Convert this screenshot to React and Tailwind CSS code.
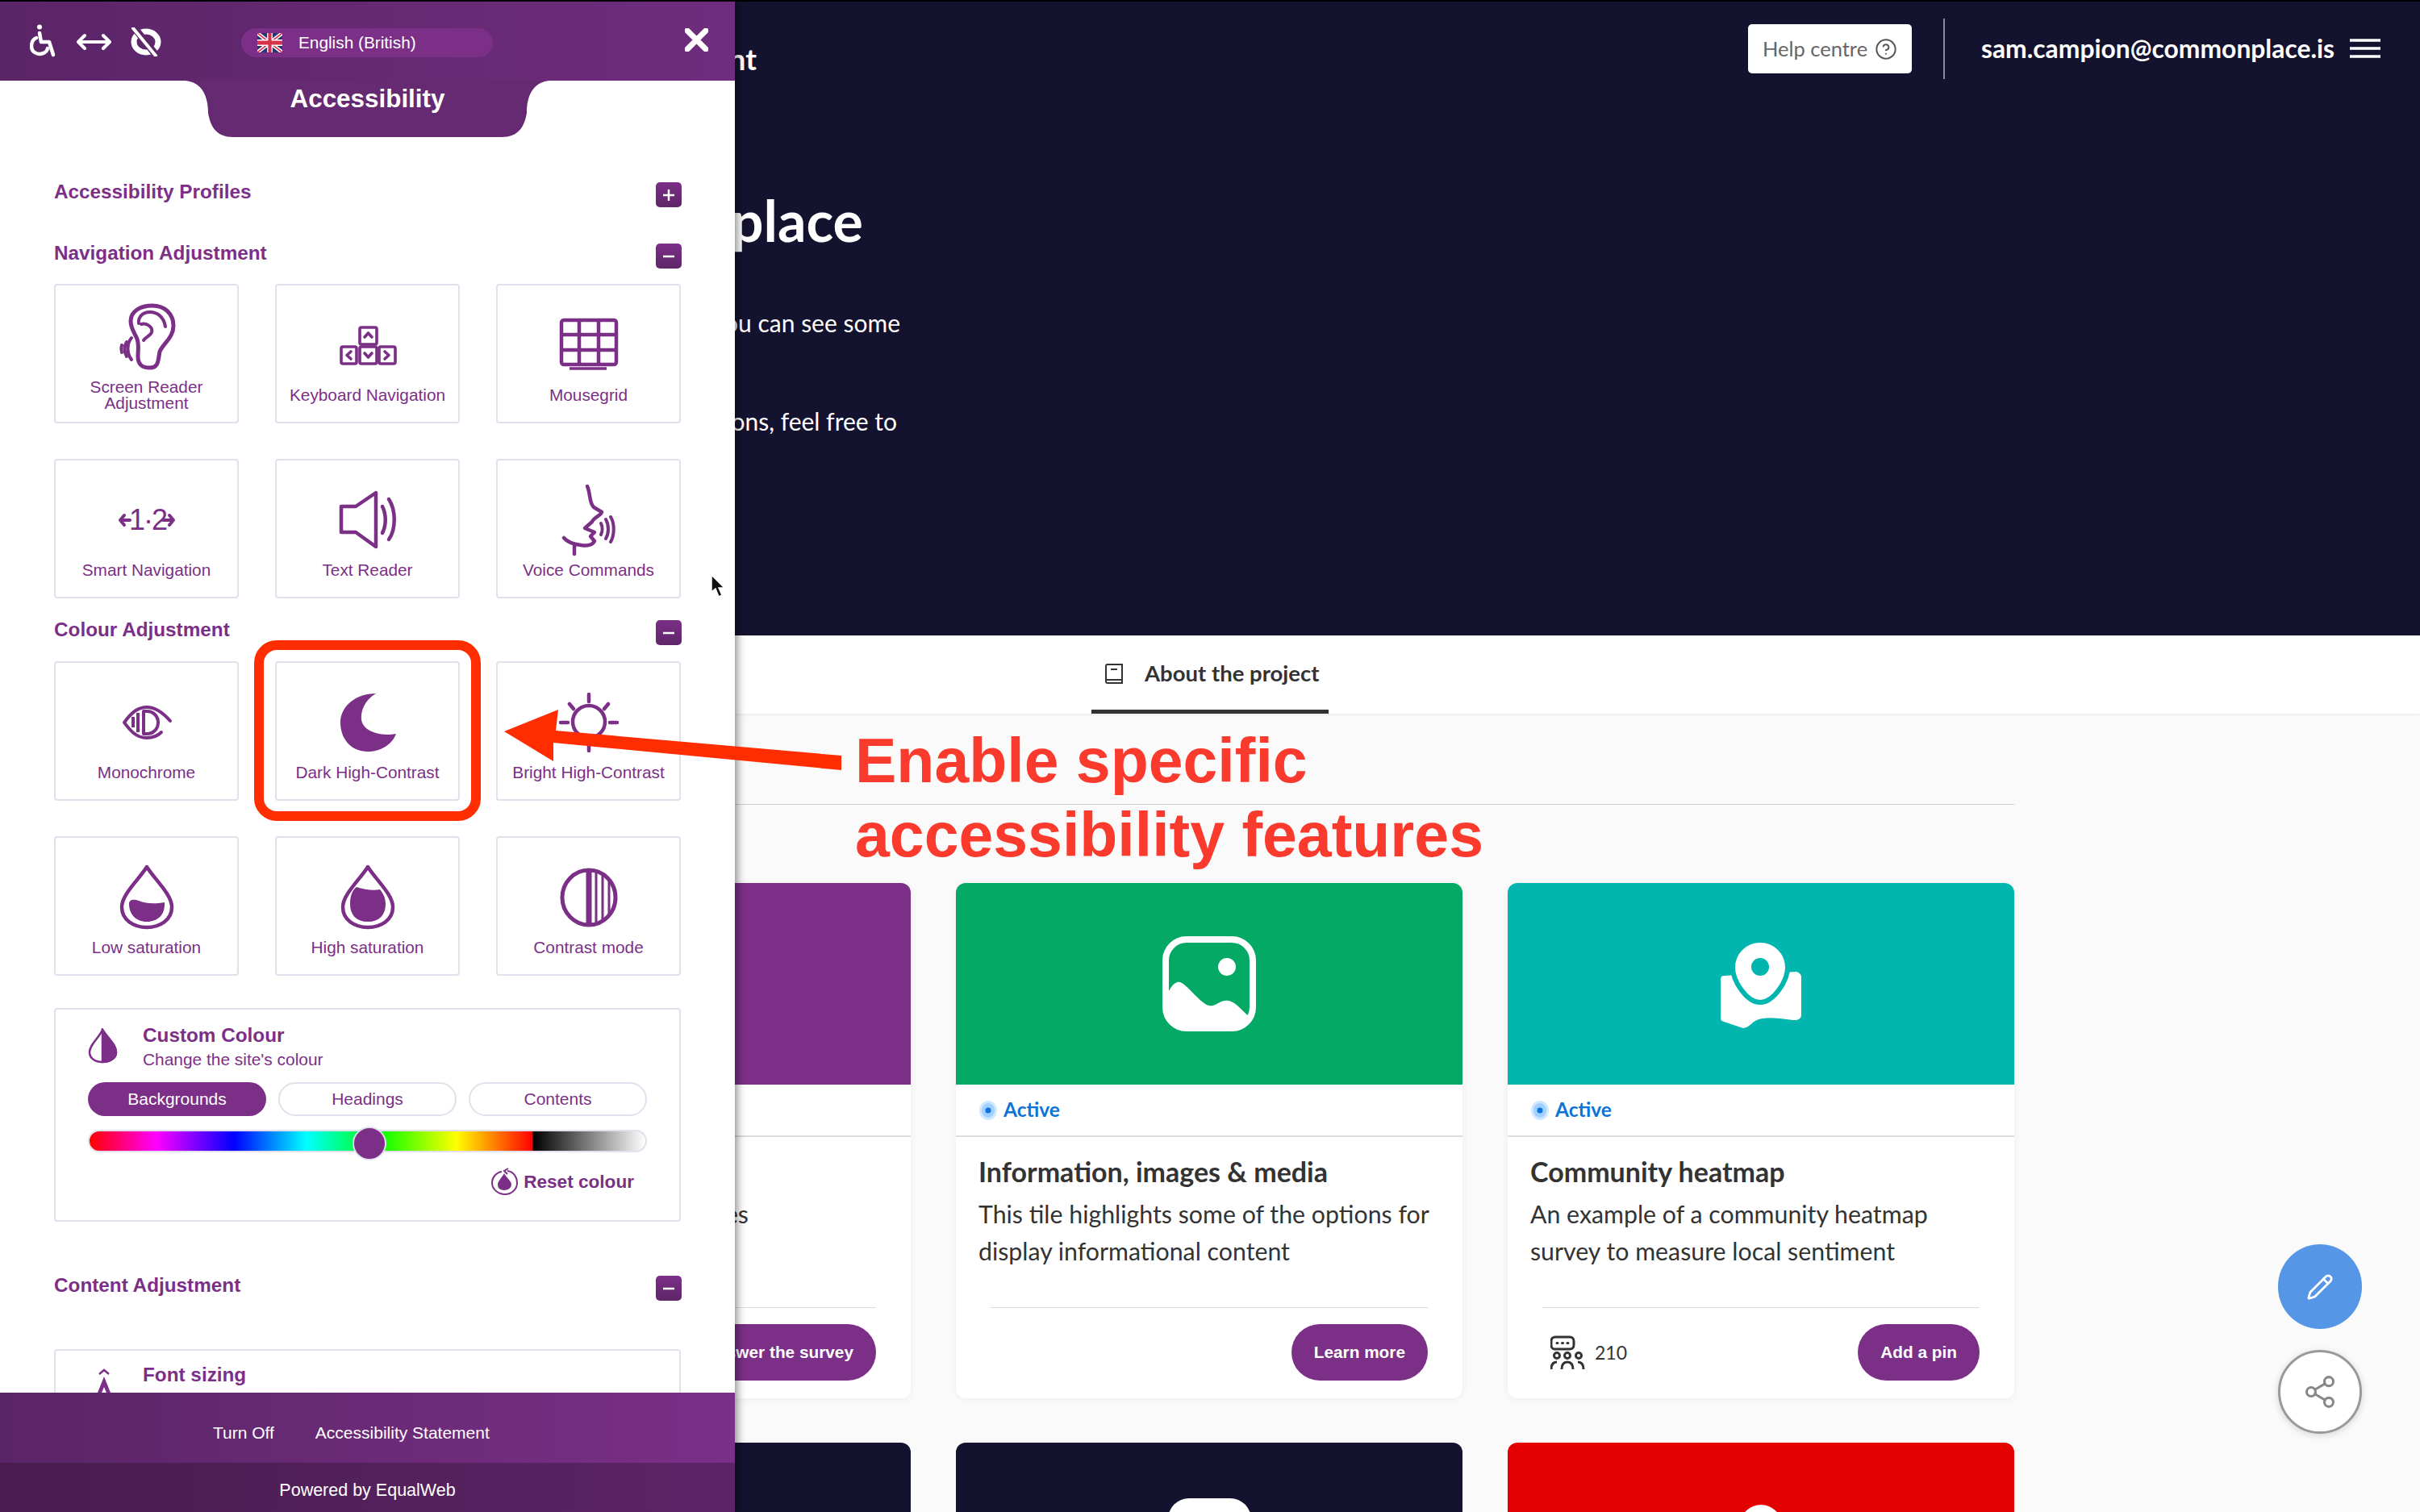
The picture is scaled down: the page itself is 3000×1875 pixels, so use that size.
import React from "react";
import { CircleHelp, Pencil, Share2 } from "lucide-react";

const P = "#7b2f87";
const purple = "text-[#7b2f87]";

function Svg({ children }) {
  return (
    <svg viewBox="0 0 80 90" width="80" height="90" fill="none" stroke={P} strokeLinecap="round" strokeLinejoin="round" style={{ overflow: "visible" }}>
      {children}
    </svg>
  );
}

const icons = {
  ear: (
    <Svg>
      <g strokeWidth="5">
        <path d="M47 5C62 5 73 15 73 30C73 45 60 52 56 62C54 72 55 82 44 82C34 82 29 78 29 68C29 58 31 52 27 44C23 36 20 32 20 24C20 12 32 5 47 5Z" />
      </g>
      <g strokeWidth="4">
        <path d="M63 31C61 18 52 13 44 13C34 13 29 20 30 27" />
        <path d="M33 28C40 26 48 32 46 38C45 42 38 44 36 48" />
        <path d="M21 45C15 52 15 64 21 72" />
        <path d="M15 50C12 55 12 62 15 68" />
        <path d="M9 54C8 57 8 60 9 63" />
      </g>
    </Svg>
  ),
  keys: (
    <Svg>
      <g strokeWidth="3.600">
        <rect x="30" y="32" width="21" height="21" rx="2" />
        <rect x="7" y="56" width="19" height="21" rx="2" />
        <rect x="30" y="56" width="21" height="21" rx="2" />
        <rect x="54" y="56" width="20" height="21" rx="2" />
        <path d="M36 44l4.500-5 4.500 5M19 62l-5 4.500 5 4.500M36 64l4.500 5 4.500-5M61 62l5 4.500-5 4.500" />
      </g>
    </Svg>
  ),
  grid: (
    <Svg>
      <g strokeWidth="4.500">
        <rect x="6" y="23" width="68" height="55" rx="3" />
        <path d="M28 23V78M52 23V78M6 41H74M6 60H74" strokeLinecap="butt" />
      </g>
      <path d="M16 83H62" strokeWidth="3.500" strokeLinecap="butt" />
    </Svg>
  ),
  smart: (
    <Svg>
      <text x="41" y="66" textAnchor="middle" fontSize="36" letterSpacing="-2" fill={P} stroke="none" fontFamily="Liberation Sans, sans-serif">1·2</text>
      <path d="M19 54H7M12 48l-5 6 5 6M60 54H73M68 48l5 6-5 6" strokeWidth="4" />
    </Svg>
  ),
  speaker: (
    <Svg>
      <path d="M7 37H25L50 20V87L25 69H7Z" strokeWidth="4.500" />
      <path d="M58 37C63 47 63 60 58 70M66 28C75 42 75 65 66 78" strokeWidth="4.500" />
    </Svg>
  ),
  face: (
    <Svg>
      <path d="M38 12C42 20 40 32 46 38L56 44C56 48 46 50 44 56L35 64L47 69L42 74L47 80C44 86 36 86 30 85C22 84 14 82 9 76M22 84V96" strokeWidth="4.500" />
      <path d="M55 58C57 62 57 68 55 72M61 53C65 60 65 70 61 77M67 50C72 58 72 72 67 81" strokeWidth="4" />
    </Svg>
  ),
  eye: (
    <Svg>
      <g strokeWidth="4">
        <path d="M12 54C22 40 30 35 40 35C52 35 62 44 69 52M12 54C18 62 26 73 40 73C48 73 54 70 58 66" />
        <path d="M36 40H40C48 40 54 46 54 54C54 62 48 68 40 68H36Z" />
        <path d="M29 42V66M23 47V60" strokeLinecap="butt" />
      </g>
    </Svg>
  ),
  moon: (
    <Svg>
      <path d="M50 18C36 26 31 40 32 50C33 62 50 72 75 68C70 82 55 90 40 90C20 90 6 75 6 54C6 34 25 18 50 18Z" fill={P} stroke="none" />
    </Svg>
  ),
  sun: (
    <Svg>
      <g strokeWidth="4.500">
        <circle cx="40" cy="53" r="20" />
        <path d="M40 19V28M16 31L21 37M64 31L59 37M5 54H14M66 54H75M40 83V89" />
      </g>
    </Svg>
  ),
  low: (
    <Svg>
      <path d="M40 16C30 32 9 50 9 66C9 82 24 91 40 91C56 91 71 82 71 66C71 50 50 32 40 16Z" strokeWidth="4.500" />
      <path d="M18 62C18 56 24 56 30 58C40 62 50 62 62 60C63 75 54 84 40 84C26 84 18 74 18 62Z" fill={P} stroke="none" />
    </Svg>
  ),
  high: (
    <Svg>
      <path d="M40 16C30 32 9 50 9 66C9 82 24 91 40 91C56 91 71 82 71 66C71 50 50 32 40 16Z" strokeWidth="4.500" />
      <path d="M18 62C18 50 22 44 26 41C36 44 46 46 55 44C60 50 62 56 62 62C62 76 54 84 40 84C26 84 18 76 18 62Z" fill={P} stroke="none" />
    </Svg>
  ),
  contrast: (
    <Svg>
      <ellipse cx="40" cy="54" rx="33" ry="34" strokeWidth="5" />
      <path d="M40 20V88" strokeWidth="7" strokeLinecap="butt" />
      <path d="M49 22V86M57 25V83M65 33V75" strokeWidth="3" strokeLinecap="butt" />
    </Svg>
  ),
};

function Tile({ icon, children }) {
  return (
    <div className="flex h-[173px] flex-col items-center rounded-[4px] border-2 border-[#e2e0ec] bg-white pt-[20px]">
      <div className="h-[90px] w-[80px]">{icons[icon]}</div>
      <div className={`mt-[5px] flex h-[42px] items-center whitespace-nowrap text-center text-[20.800px] leading-[20.500px] ${purple}`}>{children}</div>
    </div>
  );
}

function Toggle({ plus }) {
  return (
    <span className="-mr-[1px] flex h-[31px] w-[32px] items-center justify-center rounded-[5px] bg-gradient-to-b from-[#7b2f87] to-[#5f2669]">
      <svg width="16" height="16" viewBox="0 0 16 16" stroke="white" strokeWidth="2.500">
        <path d="M1 8H15" />
        {plus && <path d="M8 1V15" />}
      </svg>
    </span>
  );
}

function SectionRow({ title, plus, className }) {
  return (
    <div className={`flex items-center justify-between ${className}`}>
      <h3 className={`-mt-[8px] text-[24.300px] font-bold leading-[24px] ${purple}`}>{title}</h3>
      <Toggle plus={plus} />
    </div>
  );
}

function Flag() {
  return (
    <svg width="31" height="24" viewBox="0 0 60 40" preserveAspectRatio="none">
      <rect width="60" height="40" fill="#27346f" />
      <path d="M0 0L60 40M60 0L0 40" stroke="#fff" strokeWidth="8" />
      <path d="M0 0L60 40M60 0L0 40" stroke="#d8324a" strokeWidth="3" />
      <path d="M30 0V40M0 20H60" stroke="#fff" strokeWidth="13" />
      <path d="M30 0V40M0 20H60" stroke="#d8324a" strokeWidth="8" />
    </svg>
  );
}

function PanelHeader() {
  return (
    <div className="flex h-[98px] items-start bg-gradient-to-r from-[#5a2567] to-[#702c7e] pl-[37px] pr-[33px]">
      <div className="mt-[28px] flex items-start">
        <svg width="32" height="41" viewBox="0 0 32 41" fill="none" stroke="#fff" strokeWidth="4.500" strokeLinecap="round" strokeLinejoin="round">
          <circle cx="12" cy="3.500" r="3" fill="#fff" stroke="none" />
          <path d="M12 11L14 22L24 22L29 38" />
          <path d="M8 17C1 20 0 31 6 35C12 39 21 36 22 30" />
        </svg>
        <svg className="ml-[26px] mt-[11px]" width="43" height="22" viewBox="0 0 43 22" fill="none" stroke="#fff" strokeWidth="4" strokeLinecap="round" strokeLinejoin="round">
          <path d="M3 11H40M10 3L2 11L10 19M33 3L41 11L33 19" />
        </svg>
        <svg className="ml-[23px] mt-[4px]" width="39" height="36" viewBox="0 0 39 36" fill="none" strokeLinecap="round">
          <ellipse cx="20" cy="18" rx="15" ry="13" stroke="#fff" strokeWidth="7" />
          <path d="M6 1L33 35" stroke="#5f2669" strokeWidth="9" />
          <path d="M4 1L32 35" stroke="#fff" strokeWidth="4" />
        </svg>
      </div>
      <div className="ml-[99px] mt-[33px] flex h-[36px] w-[312px] items-center rounded-full bg-[#7b2f87] pl-[20px] text-[20.800px] text-white">
        <Flag />
        <span className="ml-[20px]">English (British)</span>
      </div>
      <svg className="ml-auto mt-[33px]" width="29" height="29" viewBox="0 0 29 29" stroke="#fff" strokeWidth="7" strokeLinecap="round">
        <path d="M3 3L26 26M26 3L3 26" />
      </svg>
    </div>
  );
}

function TitleTab() {
  return (
    <div className="relative mx-auto flex h-[70px] w-[451px] items-start justify-center pt-[4px]">
      <svg className="absolute inset-0" width="451" height="70" viewBox="0 0 451 70">
        <path d="M0 0H451C430 2 423 20 423 40C420 58 412 70 392 70H59C39 70 31 58 28 40C28 20 21 2 0 0Z" fill="#652a72" />
      </svg>
      <h2 className="relative text-[31.400px] font-bold leading-[38px] text-white">Accessibility</h2>
    </div>
  );
}

function CustomColour() {
  return (
    <div className="mt-[40px] h-[265px] rounded-[4px] border-2 border-[#e2e0ec] px-[40px] pt-[18px]">
      <div className="flex h-[71px]">
        <svg className="mt-[5px]" width="37" height="44" viewBox="0 0 37 44" fill="none" stroke={P} strokeWidth="2.500">
          <path d="M18 2C14 12 2 20 2 30C2 38 10 42 18 42C26 42 35 38 35 30C35 20 24 12 18 2Z" />
          <path d="M18 2C24 12 35 20 35 30C35 38 26 42 18 42Z" fill={P} />
        </svg>
        <div className="ml-[31px]">
          <div className={`text-[24.300px] font-bold leading-[28px] ${purple}`}>Custom Colour</div>
          <div className={`text-[20.900px] leading-[31px] ${purple}`}>Change the site's colour</div>
        </div>
      </div>
      <div className="grid grid-cols-3 gap-x-[15px] pt-[1px] text-center text-[21px]">
        <div className="flex h-[42px] items-center justify-center rounded-full bg-[#7b2f87] text-white">Backgrounds</div>
        <div className={`flex h-[42px] items-center justify-center rounded-full border-2 border-[#e2e0ec] ${purple}`}>Headings</div>
        <div className={`flex h-[42px] items-center justify-center rounded-full border-2 border-[#e2e0ec] ${purple}`}>Contents</div>
      </div>
      <div className="relative mt-[17px] h-[28px] rounded-full border-2 border-[#e2e0ec] bg-[linear-gradient(90deg,#f00_0%,#f0f_12%,#00f_26%,#0ff_39%,#0f0_52%,#ff0_66%,#f00_79.700%,#000_79.800%,#fff_100%)]">
        <div className="absolute left-[326px] top-[-6px] h-[42px] w-[42px] rounded-full border-2 border-[#e2e0ec] bg-[#7b2f87]" />
      </div>
      <div className={`mt-[19px] flex items-center justify-end pr-[16px] text-[22.600px] font-bold ${purple}`}>
        <svg width="33" height="35" viewBox="0 0 33 35" fill="none" stroke={P} strokeWidth="2">
          <path d="M20 4C28 5 32 12 32 19C32 27 25 33 17 33C9 33 1 27 1 19C1 12 6 6 13 5" />
          <path d="M21 1L16 4L20 8" />
          <path d="M16 9C13 14 9 17 9 21C9 25 12 27 16 27C20 27 24 25 24 21C24 17 19 14 16 9Z" fill={P} />
        </svg>
        <span className="ml-[7px]">Reset colour</span>
      </div>
    </div>
  );
}

function Panel() {
  return (
    <aside className="absolute left-0 top-0 bottom-0 flex w-[911px] flex-col bg-white font-['Liberation_Sans',Arial,sans-serif] shadow-[3px_0_10px_rgba(0,0,0,0.45)]">
      <PanelHeader />
      <div className="min-h-0 flex-1 overflow-hidden">
        <TitleTab />
        <div className="px-[67px] pt-[56px]">
          <SectionRow title="Accessibility Profiles" plus />
          <SectionRow title="Navigation Adjustment" className="mt-[45px]" />
          <div className="mt-[19px] grid grid-cols-3 gap-x-[45px] gap-y-[44px]">
            <Tile icon="ear">Screen Reader<br />Adjustment</Tile>
            <Tile icon="keys">Keyboard Navigation</Tile>
            <Tile icon="grid">Mousegrid</Tile>
            <Tile icon="smart">Smart Navigation</Tile>
            <Tile icon="speaker">Text Reader</Tile>
            <Tile icon="face">Voice Commands</Tile>
          </div>
          <SectionRow title="Colour Adjustment" className="mt-[27px]" />
          <div className="mt-[20px] grid grid-cols-3 gap-x-[45px] gap-y-[44px]">
            <Tile icon="eye">Monochrome</Tile>
            <Tile icon="moon">Dark High-Contrast</Tile>
            <Tile icon="sun">Bright High-Contrast</Tile>
            <Tile icon="low">Low saturation</Tile>
            <Tile icon="high">High saturation</Tile>
            <Tile icon="contrast">Contrast mode</Tile>
          </div>
          <CustomColour />
          <SectionRow title="Content Adjustment" className="mt-[67px]" />
          <div className="mt-[60px] h-[200px] rounded-[4px] border-2 border-[#e2e0ec] px-[40px] pt-[16px]">
            <div className="flex">
              <svg className="mt-[6px]" width="37" height="44" viewBox="0 0 37 44" fill={P}>
                <path d="M20 10L32 40H8Z" />
                <path d="M20 23L25 35H15Z" fill="#fff" />
                <path d="M14 7L20 2L26 7" fill="none" stroke={P} strokeWidth="2.500" />
              </svg>
              <div className={`ml-[31px] text-[24.300px] font-bold leading-[28px] ${purple}`}>Font sizing</div>
            </div>
          </div>
        </div>
      </div>
      <div className="flex h-[87px] items-center bg-gradient-to-r from-[#5a2567] to-[#7b2f87] pl-[264px] pt-[13px] text-[21px] text-white">
        <span>Turn Off</span>
        <span className="ml-[51px]">Accessibility Statement</span>
      </div>
      <div className="flex h-[61px] items-center justify-center bg-gradient-to-r from-[#481c4e] to-[#5c2467] pt-[7px] text-[21.500px] text-white">Powered by EqualWeb</div>
    </aside>
  );
}

function Dot() {
  return (
    <svg width="22" height="24" viewBox="0 0 22 24">
      <ellipse cx="11" cy="12" rx="11" ry="12" fill="#cfe7ff" />
      <ellipse cx="11" cy="12" rx="8" ry="9" fill="#9fd0ff" />
      <circle cx="11" cy="12" r="3.500" fill="#0b74d6" />
    </svg>
  );
}

function ImageGlyph() {
  return (
    <svg width="116" height="118" viewBox="0 0 116 118" fill="none">
      <rect x="4" y="4" width="108" height="110" rx="26" stroke="#fff" strokeWidth="8" />
      <ellipse cx="80" cy="38" rx="11" ry="11" fill="#fff" />
      <path d="M8 68C12 60 18 54 24 58C32 62 48 84 58 86C66 88 72 78 82 80C92 82 98 92 108 100C108 112 96 114 90 114H30C16 114 8 106 8 90Z" fill="#fff" />
    </svg>
  );
}

function PinGlyph() {
  return (
    <svg width="100" height="109" viewBox="0 0 100 109">
      <path d="M4 44C1 44 0 46 0 50V96C0 100 2 100 4 101L28 109C36 109 40 98 52 97C66 94 90 100 94 99C98 98 100 96 100 92V46C100 42 97 40 94 39Z" fill="#fff" />
      <path d="M49 0C68 0 83 15 83 34C83 50 66 77 49 77C32 77 15 50 15 34C15 15 30 0 49 0Z" fill="#fff" stroke="#00b6ae" strokeWidth="6" />
      <circle cx="49" cy="33" r="11" fill="#00b6ae" />
    </svg>
  );
}

function PeopleGlyph() {
  return (
    <svg width="43" height="43" viewBox="0 0 43 43" fill="none" stroke="#333" strokeWidth="3">
      <path d="M6 2H24C27 2 29 4 29 7V12C29 15 27 17 24 17H5C3 17 1 15 1 12V7C1 4 3 2 6 2Z" />
      <path d="M8 9.500H9M14.500 9.500H15.500M21 9.500H22" strokeLinecap="round" strokeWidth="3" />
      <circle cx="8" cy="25" r="3.500" /><circle cx="21" cy="25" r="3.500" /><circle cx="35" cy="25" r="3.500" />
      <path d="M1 42C1 36 3 33 8 33M14 42C14 36 16 33 21 33C26 33 28 36 28 42M34 33C39 33 41 36 41 42" />
    </svg>
  );
}

function ProjectCard({ color, glyph, title, desc, button, count, descClass }) {
  return (
    <article className="flex h-[639px] flex-col overflow-hidden rounded-[12px] bg-white shadow-[0_1px_8px_rgba(0,0,0,0.06)]">
      <div className={`flex h-[250px] shrink-0 items-center justify-center ${color}`}>{glyph}</div>
      <div className="flex h-[65px] shrink-0 items-center border-b-2 border-[#dcdcdc] pl-[29px]">
        <Dot />
        <span className="ml-[8px] text-[24.500px] font-bold text-[#0b74d6]">Active</span>
      </div>
      <div className="h-[211px] shrink-0 px-[28px] pt-[20px]">
        <h3 className="whitespace-nowrap text-[34px] font-bold leading-[46px] text-[#333]">{title}</h3>
        <p className={`mt-[6px] whitespace-nowrap text-[30.300px] leading-[46px] text-[#333] ${descClass || ""}`}>{desc}</p>
      </div>
      <div className="mx-[43px] flex flex-1 items-start justify-between border-t border-[#dcdcdc] pt-[20px]">
        <div className="flex items-center pl-[10px] pt-[14px] text-[23px] text-[#333]">
          {count && <PeopleGlyph />}
          {count && <span className="ml-[12px]">{count}</span>}
        </div>
        <button className="flex h-[70px] items-center rounded-full bg-[#7b2f87] px-[28px] font-['Liberation_Sans',Arial,sans-serif] text-[20.800px] font-bold text-white">{button}</button>
      </div>
    </article>
  );
}

function DarkTile({ color, children }) {
  return (
    <div className={`flex h-[300px] justify-center overflow-hidden rounded-t-[12px] pt-[69px] ${color}`}>{children}</div>
  );
}

function Main() {
  return (
    <div className="flex min-h-full flex-col font-['Lato',sans-serif]">
      <section className="h-[786px] bg-[#14132f] text-white">
        <header className="flex h-[121px] items-start">
          <div className="mt-[47px] w-[938px] whitespace-nowrap text-right text-[37px] font-bold leading-[48px]">Development</div>
          <div className="ml-[1229px] mt-[28px] flex h-[61px] w-[203px] items-center justify-center rounded-[5px] bg-white text-[25.500px] text-[#666]">
            Help centre
            <CircleHelp className="ml-[9px] text-[#555]" size={28} strokeWidth={1.700} />
          </div>
          <div className="ml-[39px] mt-[21px] h-[75px] w-[2px] bg-[#8a8a9a]" />
          <div className="ml-[45px] mt-[36px] whitespace-nowrap text-[31.800px] font-bold leading-[44px]">sam.campion@commonplace.is</div>
          <svg className="ml-[19px] mt-[46px]" width="38" height="24" viewBox="0 0 38 24" stroke="#fff" strokeWidth="3.500">
            <path d="M0 2H38M0 12H38M0 22H38" />
          </svg>
        </header>
        <div className="w-[1116px]">
          <h1 className="mt-[110px] w-[1070px] whitespace-nowrap text-right text-[70px] font-bold leading-[80px]">Commonplace</h1>
          <p className="mt-[67px] whitespace-nowrap text-right text-[30px] leading-[40px]">This is the demo project where you can see some</p>
          <p className="mt-[82px] whitespace-nowrap pr-[4px] text-right text-[30px] leading-[40px]">If you have any questions, feel free to</p>
        </div>
      </section>
      <nav className="relative h-[97px] bg-white shadow-[0_1px_4px_rgba(0,0,0,0.08)]">
        <div className="ml-[1353px] flex h-[97px] w-[294px] items-center border-b-[5px] border-[#333] pl-[17px] pt-[2px]">
          <svg width="22" height="25" viewBox="0 0 22 25" fill="none" stroke="#333" strokeWidth="2">
            <path d="M1 20V3C1 2 2 1 3 1H21V24H3C2 24 1 23 1 22V20H21" />
            <path d="M7 7H15" />
          </svg>
          <span className="ml-[27px] whitespace-nowrap text-[27.500px] font-bold text-[#333]">About the project</span>
        </div>
      </nav>
      <main className="flex-1 bg-[#fafafa] pl-[501px] pr-[503px] pt-[112px]">
        <hr className="border-[#cfcfcf]" />
        <div className="mt-[97px] grid grid-cols-3 gap-x-[56px] gap-y-[55px]">
          <ProjectCard color="bg-[#7b2f87]" title="Survey" glyph={null} desc="An example of question types" descClass="w-[399px] text-right" button="Answer the survey" />
          <ProjectCard color="bg-[#03a964]" glyph={<ImageGlyph />} title="Information, images & media" desc={<>This tile highlights some of the options for<br />display informational content</>} button="Learn more" />
          <ProjectCard color="bg-[#00b6ae]" glyph={<PinGlyph />} title="Community heatmap" desc={<>An example of a community heatmap<br />survey to measure local sentiment</>} button="Add a pin" count="210" />
          <DarkTile color="bg-[#14132f]" />
          <DarkTile color="bg-[#14132f]"><div className="h-[60px] w-[103px] rounded-t-[26px] bg-white" /></DarkTile>
          <DarkTile color="bg-[#e30000]"><div className="mt-[8px] h-[60px] w-[52px] rounded-t-full bg-white" /></DarkTile>
        </div>
      </main>
    </div>
  );
}

function Callout() {
  return (
    <>
      <div className="absolute left-[315px] top-[792px] h-[224px] w-[281px] rounded-[28px] border-[12px] border-[#ff2d00]" />
      <svg className="absolute left-[620px] top-[873px]" width="430" height="90" viewBox="620 875 430 90">
        <polygon points="625,907 692,880 689,906 1043,937 1043,955 686,921 686,944" fill="#ff2d00" />
      </svg>
      <div className="absolute left-[1060px] top-[895px] whitespace-nowrap font-['Liberation_Sans',Arial,sans-serif] text-[77px] font-bold leading-[92px] text-[#fb3a2e]">
        Enable specific<br />accessibility features
      </div>
    </>
  );
}

function Cursor() {
  return (
    <svg className="absolute left-[880px] top-[710px]" width="20" height="30" viewBox="0 0 20 30">
      <path d="M2 1V22L7 18L11 28L15 26L11 17H18Z" fill="#111" stroke="#fff" strokeWidth="1.500" />
    </svg>
  );
}

function Fabs() {
  return (
    <div className="absolute left-[2824px] top-[1541px] flex flex-col gap-[26px]">
      <div className="flex h-[105px] w-[104px] items-center justify-center rounded-full bg-[#5597e6]">
        <Pencil className="text-white" size={34} strokeWidth={2} />
      </div>
      <div className="flex h-[104px] w-[104px] items-center justify-center rounded-full border-[3px] border-[#999] bg-white shadow-[0_2px_10px_rgba(0,0,0,0.15)]">
        <Share2 className="text-[#888]" size={44} strokeWidth={1.700} />
      </div>
    </div>
  );
}

export default function App() {
  return (
    <div className="relative h-[1875px] w-[3000px] overflow-hidden border-t-2 border-black bg-[#fafafa]">
      <Main />
      <Panel />
      <Cursor />
      <Callout />
      <Fabs />
    </div>
  );
}
